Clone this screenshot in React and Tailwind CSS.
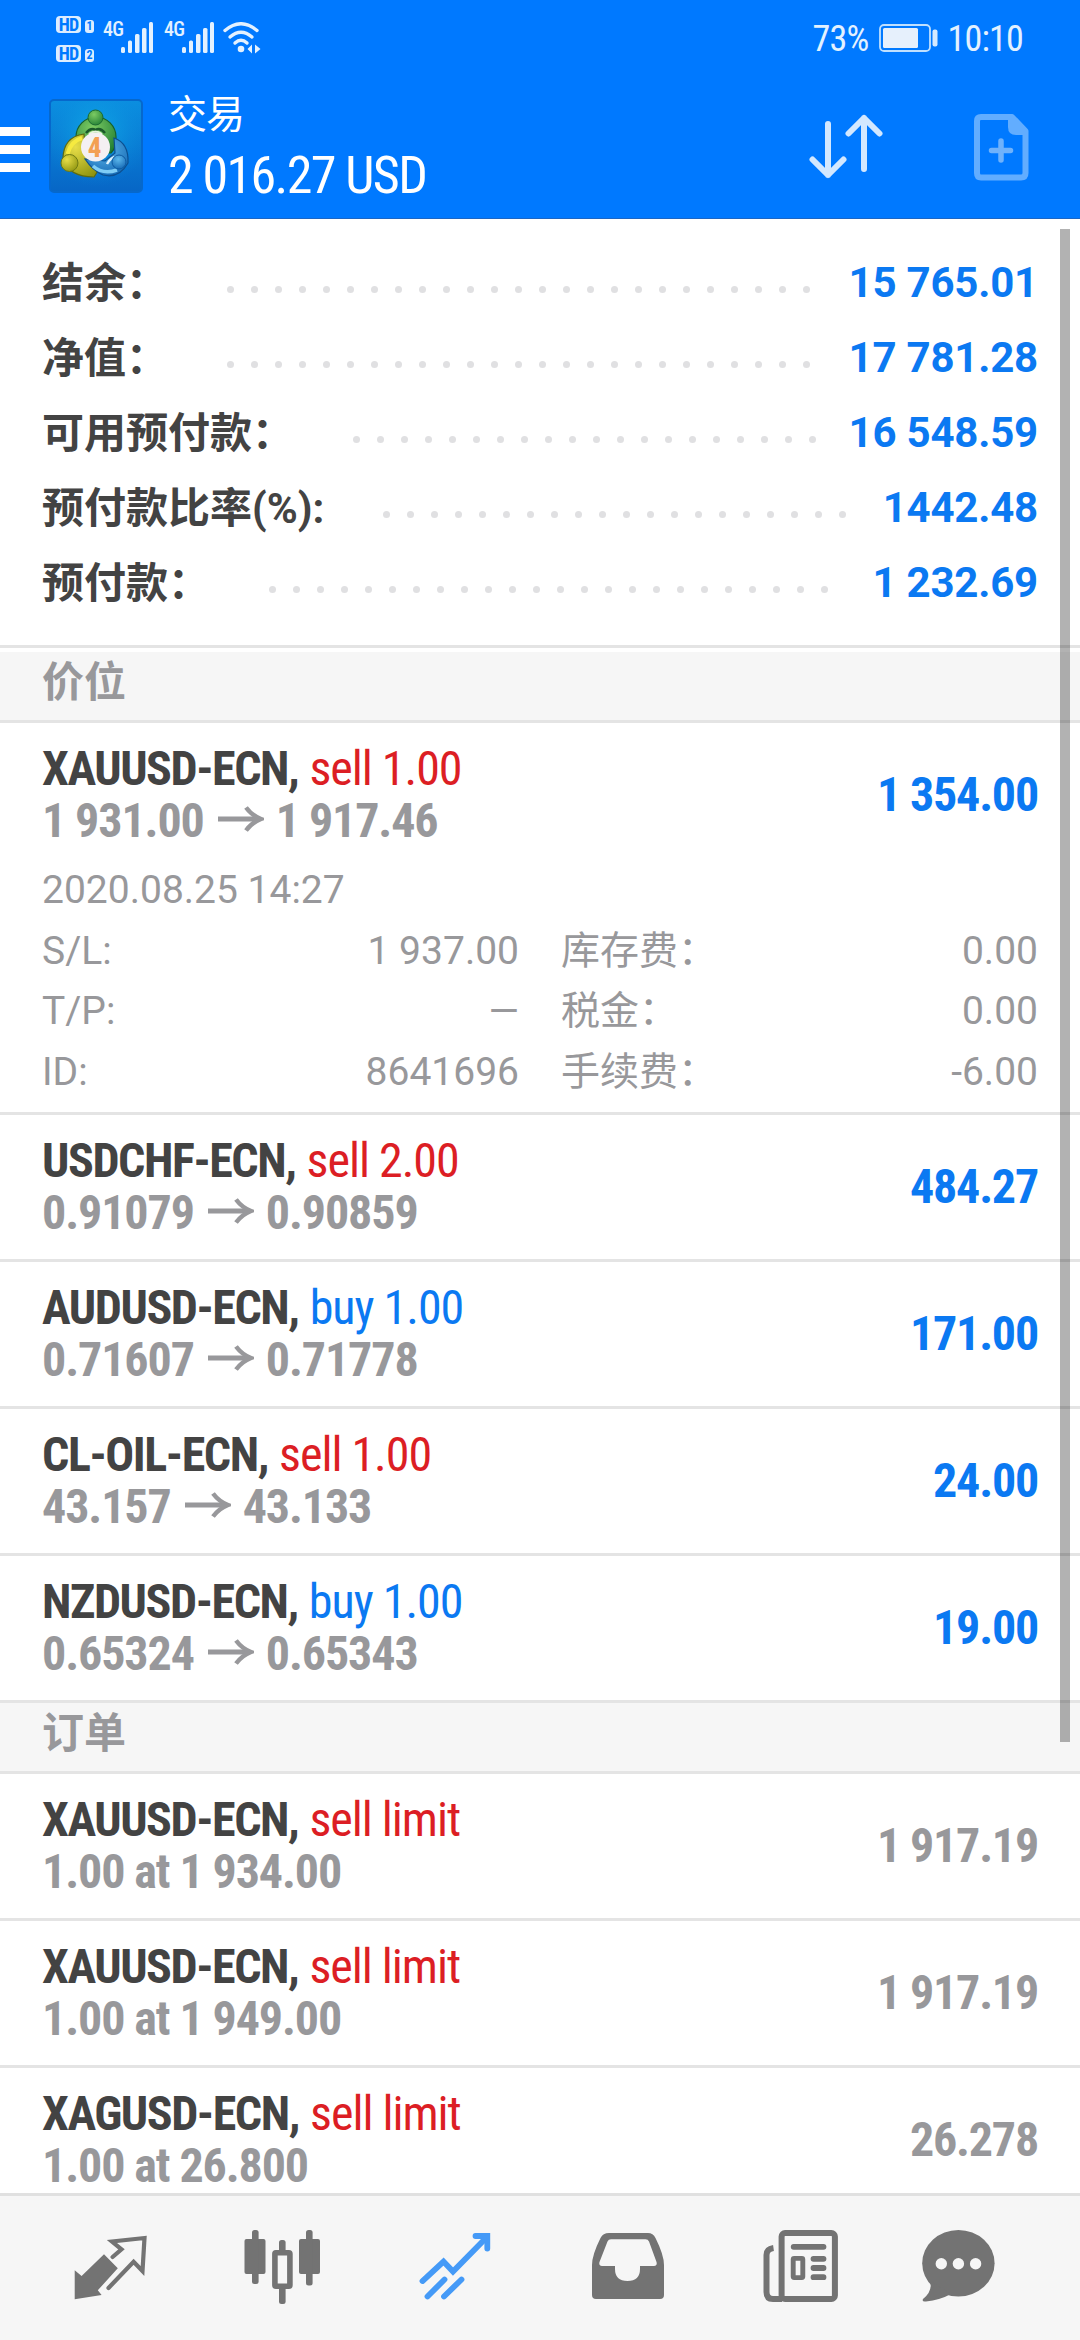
import React from 'react';

const summary = [
  { label: '结余：', value: '15 765.01', dots: 25 },
  { label: '净值：', value: '17 781.28', dots: 25 },
  { label: '可用预付款：', value: '16 548.59', dots: 20 },
  { label: '预付款比率(%):', value: '1442.48', dots: 20 },
  { label: '预付款：', value: '1 232.69', dots: 24 },
];

const positions = [
  {
    symbol: 'XAUUSD-ECN',
    side: 'sell',
    volume: '1.00',
    open: '1 931.00',
    current: '1 917.46',
    profit: '1 354.00',
    details: {
      time: '2020.08.25 14:27',
      rows: [
        ['S/L:', '1 937.00', '库存费：', '0.00'],
        ['T/P:', '—', '税金：', '0.00'],
        ['ID:', '8641696', '手续费：', '-6.00'],
      ],
    },
  },
  { symbol: 'USDCHF-ECN', side: 'sell', volume: '2.00', open: '0.91079', current: '0.90859', profit: '484.27' },
  { symbol: 'AUDUSD-ECN', side: 'buy', volume: '1.00', open: '0.71607', current: '0.71778', profit: '171.00' },
  { symbol: 'CL-OIL-ECN', side: 'sell', volume: '1.00', open: '43.157', current: '43.133', profit: '24.00' },
  { symbol: 'NZDUSD-ECN', side: 'buy', volume: '1.00', open: '0.65324', current: '0.65343', profit: '19.00' },
];

const orders = [
  { symbol: 'XAUUSD-ECN', type: 'sell limit', info: '1.00 at 1 934.00', price: '1 917.19' },
  { symbol: 'XAUUSD-ECN', type: 'sell limit', info: '1.00 at 1 949.00', price: '1 917.19' },
  { symbol: 'XAGUSD-ECN', type: 'sell limit', info: '1.00 at 26.800', price: '26.278' },
];

const SignalIcon = () => (
  <svg className="w-8 h-8" viewBox="0 0 32 32" fill="#e3f1ff">
    <rect x="0" y="25" width="4" height="6" rx="1.5" />
    <rect x="7" y="18.500" width="4" height="12.500" rx="1.500" />
    <rect x="14" y="12" width="4.500" height="19" rx="1.500" />
    <rect x="21" y="6" width="4.500" height="25" rx="1.500" />
    <rect x="28" y="0" width="4" height="31" rx="1.500" />
  </svg>
);

const HdBadge = ({ sim }) => (
  <div className="flex items-end gap-1 h-[17px]">
    <span className="w-[25px] h-[17px] rounded-[4px] bg-[#dcedff] text-[#0079ff] text-[18px] leading-[17px] font-bold text-center tracking-tighter">
      HD
    </span>
    <span className="w-[9px] h-[13px] rounded-[3px] bg-[#dcedff] text-[#0079ff] text-[12px] leading-[13px] font-bold text-center">
      {sim}
    </span>
  </div>
);

const WifiIcon = () => (
  <svg className="w-[38px] h-8" viewBox="0 0 38 32" fill="none" stroke="#e3f1ff" strokeWidth="3.400" strokeLinecap="round">
    <path d="M2 8.500 Q18 -5 34 8.500" />
    <path d="M7 15 Q18 5.500 29 15" />
    <path d="M12 21 Q18 15.500 24 21" />
    <circle cx="18" cy="27" r="3.300" fill="#e3f1ff" stroke="none" />
    <path d="M29 22.500 V31.500 L24.500 27 Z M32 22.500 V31.500 L37.500 27 Z" fill="#e3f1ff" stroke="none" />
  </svg>
);

const StatusBar = () => (
  <div className="flex h-[76px] pl-14 pr-[57px] text-[#e3f1ff]">
    <div className="flex flex-col gap-[12px] pt-4">
      <HdBadge sim="1" />
      <HdBadge sim="2" />
    </div>
    <div className="flex pt-[22px] pl-[9px]">
      <span className="w-[18px] text-[20px] leading-[15px] font-medium tracking-[-0.8px]">4G</span>
      <SignalIcon />
      <span className="w-[18px] ml-[11px] text-[20px] leading-[15px] font-medium tracking-[-0.8px]">4G</span>
      <SignalIcon />
      <div className="ml-[9px]">
        <WifiIcon />
      </div>
    </div>
    <div className="flex ml-auto pt-[17px] text-[36px] leading-[44px] tracking-[-0.8px]">
      <span>73%</span>
      <svg className="w-[60px] h-[29px] mt-[7px] ml-[10px] mr-[9px]" viewBox="0 0 60 29">
        <rect x="1" y="1" width="50" height="26" rx="4" fill="none" stroke="#bfe0ff" strokeWidth="1.800" />
        <rect x="4" y="4" width="35" height="20" rx="1.500" fill="#e6f0fc" />
        <rect x="53.500" y="5.500" width="5" height="17" rx="2" fill="#d5eaff" />
      </svg>
      <span>10:10</span>
    </div>
  </div>
);

const Logo = () => (
  <svg className="w-[94px] h-[94px]" viewBox="0 0 94 94">
    <defs>
      <linearGradient id="tile" x1="0" y1="0" x2="0" y2="1">
        <stop offset="0" stopColor="#0b8fe0" />
        <stop offset="1" stopColor="#0766c6" />
      </linearGradient>
      <radialGradient id="glow" cx="0.500" cy="0.350" r="0.600">
        <stop offset="0" stopColor="#10b0e8" stopOpacity="0.900" />
        <stop offset="1" stopColor="#0a86dc" stopOpacity="0" />
      </radialGradient>
      <radialGradient id="green" cx="0.400" cy="0.300" r="0.800">
        <stop offset="0" stopColor="#7ccb63" />
        <stop offset="1" stopColor="#1f7d33" />
      </radialGradient>
      <radialGradient id="yellow" cx="0.350" cy="0.300" r="0.800">
        <stop offset="0" stopColor="#e8de48" />
        <stop offset="1" stopColor="#8e9410" />
      </radialGradient>
      <radialGradient id="blue" cx="0.450" cy="0.300" r="0.800">
        <stop offset="0" stopColor="#5db8ec" />
        <stop offset="1" stopColor="#0f62b0" />
      </radialGradient>
    </defs>
    <rect x="1" y="1" width="92" height="92" rx="4" fill="url(#tile)" stroke="#0668cc" strokeWidth="2" />
    <rect x="2" y="2" width="90" height="90" rx="4" fill="url(#glow)" />
    <path d="M27 38 A20 20 0 0 1 67 38 Q68 48 62 54 L32 54 Q26 46 27 38Z" fill="url(#green)" stroke="#17602c" strokeWidth="1.200" />
    <path d="M37 34 Q42 28 46.500 31 Q51 28 56 34" stroke="#1b5a2a" strokeWidth="2.500" fill="none" />
    <path d="M40 35 Q46.500 30 53 35" stroke="#e4f5dc" strokeWidth="2" fill="none" />
    <path d="M35 35 Q14 38 14 60 Q20 78 45 78 L50 70 L36 52Z" fill="url(#yellow)" stroke="#5d6a10" strokeWidth="1.200" />
    <path d="M18.500 55 Q22 42 33 39" stroke="#f6ea40" strokeWidth="4" fill="none" />
    <path d="M65 39 Q80 44 79 64 Q70 80 54 76 Q44 72 36 60 L56 62 L66 54Z" fill="url(#blue)" stroke="#0c4f90" strokeWidth="1.200" />
    <path d="M44 67 Q54 76 68 71" stroke="#7fcdf5" strokeWidth="3.500" fill="none" />
    <path d="M58 65 Q62 58 67 58" stroke="#dff3ff" strokeWidth="2.500" fill="none" />
    <circle cx="46.500" cy="18.500" r="7.500" fill="url(#green)" stroke="#1a6a30" />
    <circle cx="20.500" cy="64" r="8.500" fill="url(#yellow)" stroke="#6f7a12" />
    <circle cx="70" cy="63" r="7" fill="url(#blue)" stroke="#0d5aa2" />
    <circle cx="46.500" cy="48" r="14.500" fill="#f4f0f2" />
    <text x="45.500" y="57.500" textAnchor="middle" fontSize="27" fontWeight="800" fill="#f3a052">4</text>
  </svg>
);

const Header = () => (
  <header className="h-[219px] bg-[#0079ff] border-b border-[#1c66c4]">
    <StatusBar />
    <div className="flex">
      <div className="flex flex-col gap-[9px] w-[30px] pt-[51px]">
        <div className="h-[9px] bg-white" />
        <div className="h-[9px] bg-white" />
        <div className="h-[9px] bg-white" />
      </div>
      <div className="ml-[19px] pt-[23px]">
        <Logo />
      </div>
      <div className="ml-[25px] text-white">
        <div className="pt-[15px] text-[39px] leading-[48px] tracking-[-1px]">交易</div>
        <div className="text-[52px] leading-[60px] pt-[7px] tracking-[-1.6px]">2 016.27 USD</div>
      </div>
      <svg className="w-[74px] h-[66px] ml-auto mt-[38px]" viewBox="809 114 74 66" fill="none" stroke="#d3e8ff" strokeWidth="6" strokeLinecap="round" strokeLinejoin="round">
        <path d="M828 124 V175 M812.500 159.500 L828 175 L843.500 159.500" />
        <path d="M864 169 V118 M848.500 133.500 L864 118 L879.500 133.500" />
      </svg>
      <svg className="w-[55px] h-[67px] ml-[91px] mr-[51px] mt-[38px]" viewBox="0 0 55 67" fill="none">
        <path d="M7 3 H38 L51.500 17 V59 Q51.500 63.500 47 63.500 H7 Q3 63.500 3 59 V7 Q3 3 7 3Z" stroke="#62adff" strokeWidth="6" strokeLinejoin="round" />
        <path d="M34 3 V13 Q34 21 42 21 H52 V15 L40 3Z" fill="#62adff" />
        <path d="M27 27 V46 M17.500 36.500 H36.500" stroke="#6fb2fb" strokeWidth="5.500" strokeLinecap="round" />
      </svg>
    </div>
  </header>
);

const Dots = ({ count }) => (
  <div className="flex ml-[50px] pt-[14px]">
    {Array.from({ length: count }, (_, i) => (
      <div key={i} className="flex w-6 justify-center">
        <div className="w-[7px] h-[7px] rounded-full bg-[#e0e0e2]" />
      </div>
    ))}
  </div>
);

const Section = ({ title }) => (
  <div className="h-[68px] pl-[42px] pt-[10px] bg-[#f6f6f6] text-[42px] leading-[42px] font-bold text-[#98989b]">
    {title}
  </div>
);

const Arrow = () => (
  <svg className="inline-block align-baseline w-[46px] h-[26px] ml-[14px] mr-[12px] mb-[5px]" viewBox="0 0 46 26" fill="none" stroke="#98989b" strokeWidth="5">
    <path d="M0 13 H42" />
    <path d="M28 1.500 Q34 9.500 43 13 Q34 16.500 28 24.500" strokeWidth="4.500" />
  </svg>
);

const Row = ({ symbol, action, color, info, value, valueColor, children }) => (
  <div className="border-b-[3px] border-[#e4e4e4]">
    <div className="flex justify-between h-36 px-[42px] text-[48px] leading-[52px]">
      <div className="pt-5 whitespace-nowrap">
        <div>
          <span className="font-bold text-[#434343] tracking-[-1.45px]">{symbol},</span>{' '}
          <span className={`tracking-[-1px] ${color}`}>{action}</span>
        </div>
        <div className="h-[52px] font-bold text-[#98989b] tracking-[-1.1px]">{info}</div>
      </div>
      <div className={`pt-[46px] font-bold tracking-[-1.2px] ${valueColor}`}>{value}</div>
    </div>
    {children}
  </div>
);

const Details = ({ time, rows }) => (
  <div className="px-[42px] -mt-[7px] pb-[10px] font-['Roboto','Noto_Sans_CJK_SC',sans-serif] text-[39px] leading-[60.5px] text-[#98989b]">
    <div>{time}</div>
    {rows.map(([left, leftValue, right, rightValue]) => (
      <div key={left} className="grid grid-cols-2 gap-x-[42px]">
        <div className="flex justify-between">
          <span>{left}</span>
          <span>{leftValue}</span>
        </div>
        <div className="flex justify-between">
          <span>{right}</span>
          <span>{rightValue}</span>
        </div>
      </div>
    ))}
  </div>
);

// each icon is drawn inside a 172x145 tab
const tabIcons = [
  <svg key="quotes" className="w-[172px] h-[145px]" viewBox="24 2195 172 145">
    <path d="M74.700 2269.300 L81.600 2275 L104 2253.300 L117.800 2267.300 L97.800 2289.300 L101.600 2294 L74.700 2298.300Z" fill="#737373" />
    <path d="M112.600 2256 L121.500 2248.300 L112 2240.500 L144.500 2237 L142.500 2270 L133.600 2260.700 L108.500 2287" fill="none" stroke="#737373" strokeWidth="4.200" strokeLinecap="round" />
  </svg>,
  <svg key="chart" className="w-[172px] h-[145px]" viewBox="196 2195 172 145" fill="#737373">
    <rect x="244.500" y="2238" width="21" height="35" rx="2" />
    <rect x="252" y="2229" width="6.600" height="54" rx="2.500" />
    <rect x="299" y="2238" width="21" height="35" rx="2" />
    <rect x="306" y="2229" width="6.600" height="55.500" rx="2.500" />
    <rect x="279" y="2239" width="6.600" height="13" rx="2.500" />
    <rect x="279" y="2285" width="6.600" height="18" rx="2.500" />
    <rect x="274.900" y="2251.700" width="15" height="33.500" rx="1" fill="none" stroke="#737373" strokeWidth="5.600" />
  </svg>,
  <svg key="trade" className="w-[172px] h-[145px]" viewBox="368 2195 172 145" fill="none" stroke="#459af7" strokeWidth="5.800" strokeLinecap="round" strokeLinejoin="round">
    <path d="M422.500 2280 L443.500 2260.500 L453 2270.500 L485 2238" strokeLinejoin="miter" />
    <path d="M475.500 2235 H487.300 V2247.500" strokeLinejoin="miter" />
    <path d="M427.500 2295.500 L444.500 2278.500 M444 2295.500 L461.500 2278.500" />
  </svg>,
  <svg key="history" className="w-[172px] h-[145px]" viewBox="540 2195 172 145" fill="#737373">
    <path fillRule="evenodd" d="M609 2232 H648 Q653 2232 655.500 2237 Q664 2254 664 2264 V2294 Q664 2298 660 2298 H596 Q592 2298 592 2294 V2264 Q592 2254 600.500 2237 Q603 2232 609 2232Z M611 2238.300 Q608.500 2238.300 607.500 2240.500 L599.500 2261 Q598.500 2265 602 2265 H615 V2268 Q615 2280 627.500 2280 Q640 2280 640 2268 V2265 H654 Q657.500 2265 656.500 2261 L649 2240.500 Q648 2238.300 645.500 2238.300Z" />
  </svg>,
  <svg key="news" className="w-[172px] h-[145px]" viewBox="712 2195 172 145" fill="none" stroke="#737373" strokeWidth="6">
    <rect x="781.600" y="2232" width="53.300" height="66" rx="3.500" />
    <path d="M773.500 2247 Q766.500 2248 766.500 2254 V2291 Q766.500 2298 773 2298 H782" />
    <path d="M793.700 2245.800 H823.500 M813.500 2257.800 H823.500 M813.500 2267 H823.500 M813.500 2276.200 H823.500" strokeLinecap="round" strokeWidth="5.800" />
    <rect x="793.200" y="2257.400" width="9.600" height="19.200" rx="1" strokeWidth="4.900" />
  </svg>,
  <svg key="chat" className="w-[172px] h-[145px]" viewBox="884 2195 172 145" fill="#737373">
    <ellipse cx="958.400" cy="2262.300" rx="36.200" ry="33.300" />
    <path d="M930 2280 Q933 2290 923 2298 Q921.500 2301 926 2300.500 Q940 2299 951 2293Z" />
    <circle cx="941.300" cy="2262.700" r="5.700" fill="#f6f6f6" />
    <circle cx="958.400" cy="2262.700" r="5.700" fill="#f6f6f6" />
    <circle cx="975.600" cy="2262.700" r="5.700" fill="#f6f6f6" />
  </svg>,
];

const App = () => {
  return (
    <div className="relative flex flex-col w-[1080px] h-[2340px] overflow-hidden bg-white font-['Roboto_Condensed','Roboto','Noto_Sans_CJK_SC',sans-serif]">
      <Header />

      <main className="flex-1 min-h-0 overflow-hidden">
        {/* Account summary */}
        <div className="pt-[26px] pb-[25px] px-[42px] font-['Roboto','Noto_Sans_CJK_SC',sans-serif] text-[42px] leading-[75px] font-bold">
          {summary.map((item) => (
            <div key={item.label} className="flex items-center">
              <span className="pt-[2px] leading-[73px] text-[#434343]">{item.label}</span>
              <Dots count={item.dots} />
              <span className="ml-auto tracking-[-0.2px] text-[#0b79f2]">{item.value}</span>
            </div>
          ))}
        </div>

        {/* Positions */}
        <div className="border-y-[3px] border-[#e4e4e4] pt-1">
          <Section title="价位" />
        </div>
        {positions.map((p) => (
          <Row
            key={p.symbol}
            symbol={p.symbol}
            action={`${p.side} ${p.volume}`}
            color={p.side === 'sell' ? 'text-[#dc1e24]' : 'text-[#0b79f2]'}
            info={<>{p.open}<Arrow />{p.current}</>}
            value={p.profit}
            valueColor="text-[#0b79f2]"
          >
            {p.details && <Details time={p.details.time} rows={p.details.rows} />}
          </Row>
        ))}

        {/* Pending orders */}
        <div className="border-b-[3px] border-[#e4e4e4]">
          <Section title="订单" />
        </div>
        {orders.map((o, idx) => (
          <Row
            key={idx}
            symbol={o.symbol}
            action={o.type}
            color="text-[#dc1e24]"
            info={o.info}
            value={o.price}
            valueColor="text-[#98989b]"
          />
        ))}
      </main>

      <nav className="flex h-[147px] pl-6 bg-[#f6f6f6] border-t-[3px] border-[#e0e0e0]">{tabIcons}</nav>

      {/* Scroll thumb */}
      <div className="absolute top-[229px] right-[10px] w-[10px] h-[1513px] bg-black/30" />
    </div>
  );
};

export default App;
